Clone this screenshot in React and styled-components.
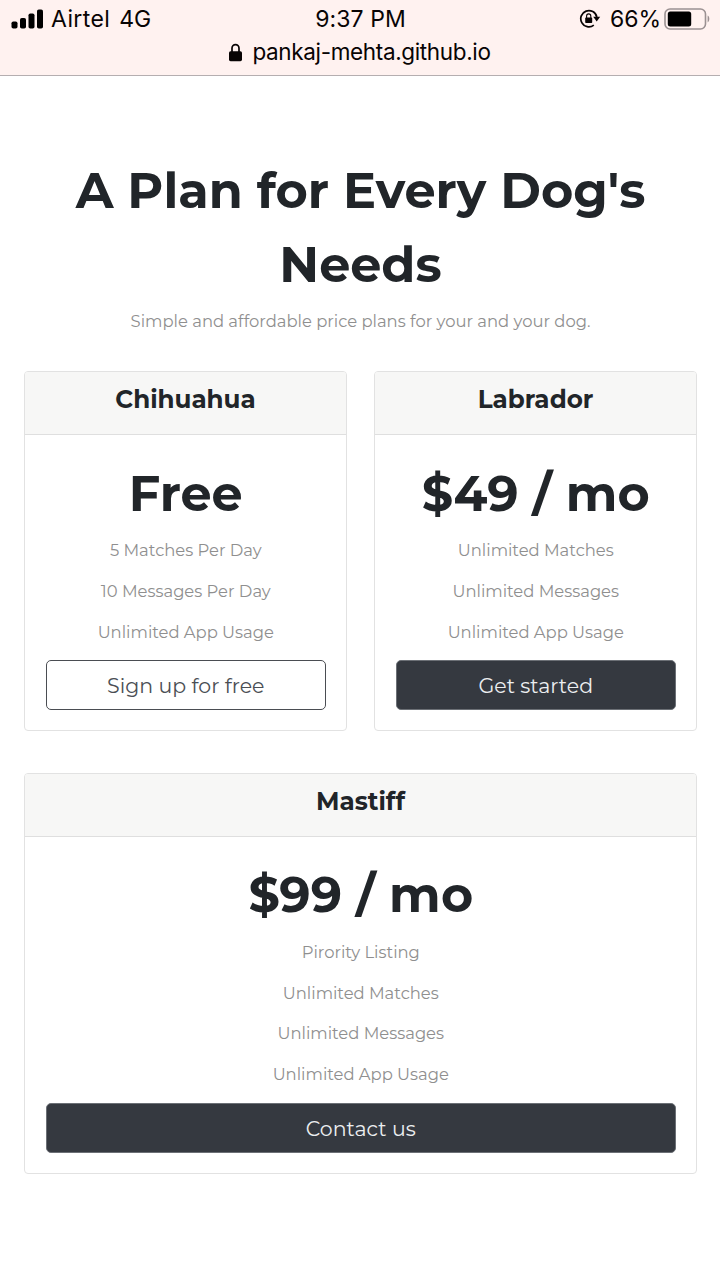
import React from "react";
import styled, { createGlobalStyle } from "styled-components";

const GlobalStyle = createGlobalStyle`
  * { box-sizing: border-box; }
  body { margin: 0; background: #fff; color: #212529; font-family: Montserrat, Inter, sans-serif; }
  h1, h2, h3, p { margin: 0; }
`;

const Page = styled.div`
  width: 720px;
  height: 1280px;
  overflow: hidden;
  background: #fff;
`;

const BrowserBar = styled.header`
  height: 76px;
  background: #fff2f0;
  border-bottom: 1px solid #b5aeb0;
  color: #080404;
  font-family: Inter, sans-serif;
`;

const StatusRow = styled.div`
  display: grid;
  grid-template-columns: 1fr auto 1fr;
  align-items: center;
  height: 38px;
  padding: 0 10px 0 11px;
  font-size: 23px;
  line-height: 38px;
  white-space: nowrap;
`;

const StatusGroup = styled.div`
  display: flex;
  align-items: center;
  gap: ${(p) => p.$gap}px;
  justify-content: ${(p) => (p.$end ? "flex-end" : "flex-start")};
`;

const StatusText = styled.span`
  letter-spacing: ${(p) => p.$tracking || 0}px;
`;

const AddressRow = styled.div`
  display: flex;
  align-items: center;
  justify-content: center;
  gap: 10px;
  height: 28px;
  font-size: 22.5px;
  line-height: 28px;
`;

const Pricing = styled.main`
  padding: 76.5px 23px 0 24px;
  text-align: center;
`;

const Title = styled.h1`
  font-size: 49.3px;
  font-weight: 700;
  line-height: 74px;
`;

const Muted = styled.p`
  color: #8f8f8f;
  font-size: 16.4px;
  font-weight: 400;
  line-height: 25.5px;
  white-space: nowrap;
`;

const Subtitle = styled(Muted)`
  margin-top: 8.5px;
`;

const Plans = styled.section`
  display: grid;
  grid-template-columns: 1fr 1fr;
  gap: 41.4px 27px;
  margin-top: 36.5px;
`;

const Card = styled.article`
  grid-column: ${(p) => (p.$wide ? "1 / -1" : "auto")};
  border: 1px solid #e2e2e2;
  border-radius: 4px;
  overflow: hidden;
`;

const CardHeader = styled.div`
  height: 63px;
  padding-top: 8px;
  background: #f7f7f6;
  border-bottom: 1px solid #dfdfdf;
`;

const PlanName = styled.h3`
  font-size: 24.6px;
  font-weight: 700;
  line-height: 38px;
`;

const CardBody = styled.div`
  display: flex;
  flex-direction: column;
  padding: 21.5px 20.5px 20px 21px;
`;

const Price = styled.h2`
  margin-bottom: 8.3px;
  font-size: 49.2px;
  font-weight: 700;
  line-height: 73.5px;
  white-space: nowrap;
`;

const Feature = styled(Muted)`
  margin-bottom: 15.2px;
`;

const PlanButton = styled.button`
  height: 50px;
  padding: 1px 0 0;
  border: 1px solid ${(p) => (p.$outline ? "#4a4d52" : "#6c7076")};
  border-radius: 5px;
  background: ${(p) => (p.$outline ? "#fff" : "#353940")};
  color: ${(p) => (p.$outline ? "#4a4e54" : "#eceef0")};
  font: 400 20.5px/47px Montserrat, Inter, sans-serif;
`;

const SignalIcon = () => (
  <svg width="33" height="20" viewBox="0 0 33 20">
    <rect x="0.5" y="12.5" width="6" height="7" rx="1.8" />
    <rect x="9" y="9" width="6" height="10.5" rx="1.8" />
    <rect x="17.5" y="4.5" width="6" height="15" rx="1.8" />
    <rect x="26" y="0.5" width="6" height="19" rx="1.8" />
  </svg>
);

const RotationLockIcon = () => (
  <svg width="22" height="20" viewBox="0 0 22 20" fill="none">
    <path d="M14.8 16.1A8.1 8.1 0 1 1 17.8 8" stroke="#080404" strokeWidth="1.7" />
    <path d="M14.2 7.8h7l-3.5 4.6z" fill="#080404" />
    <rect x="6.2" y="8.6" width="7" height="5.4" rx="0.8" fill="#080404" />
    <path d="M7.6 9V7a2.1 2.1 0 0 1 4.2 0V9" stroke="#080404" strokeWidth="1.1" />
  </svg>
);

const BatteryIcon = () => (
  <svg width="46" height="22" viewBox="0 0 46 22">
    <rect x="1" y="1" width="40.5" height="20" rx="5" fill="none" stroke="#9b9192" strokeWidth="1.6" />
    <rect x="3.8" y="3.6" width="23.4" height="14.8" rx="2.5" fill="#000" />
    <path d="M43.6 7.6c2.3 1 2.3 5.8 0 6.8z" fill="#9b9192" />
  </svg>
);

const LockIcon = () => (
  <svg width="13" height="19" viewBox="0 0 13 19">
    <path d="M3 9V5.2a3.5 3.5 0 0 1 7 0V9" fill="none" stroke="#080404" strokeWidth="1.7" />
    <rect x="0" y="8.2" width="13" height="10" rx="1.6" fill="#080404" />
  </svg>
);

const plans = [
  {
    name: "Chihuahua",
    price: "Free",
    features: ["5 Matches Per Day", "10 Messages Per Day", "Unlimited App Usage"],
    action: "Sign up for free",
    outline: true,
  },
  {
    name: "Labrador",
    price: "$49 / mo",
    features: ["Unlimited Matches", "Unlimited Messages", "Unlimited App Usage"],
    action: "Get started",
  },
  {
    name: "Mastiff",
    price: "$99 / mo",
    features: ["Pirority Listing", "Unlimited Matches", "Unlimited Messages", "Unlimited App Usage"],
    action: "Contact us",
    wide: true,
  },
];

const PlanCard = ({ plan }) => (
  <Card $wide={plan.wide}>
    <CardHeader>
      <PlanName>{plan.name}</PlanName>
    </CardHeader>
    <CardBody>
      <Price>{plan.price}</Price>
      {plan.features.map((label) => (
        <Feature key={label}>{label}</Feature>
      ))}
      <PlanButton $outline={plan.outline}>{plan.action}</PlanButton>
    </CardBody>
  </Card>
);

export default function App() {
  return (
    <>
      <GlobalStyle />
      <Page>
        <BrowserBar>
          <StatusRow>
            <StatusGroup $gap={7}>
              <SignalIcon />
              <StatusGroup $gap={9}>
                <StatusText $tracking={0.4}>Airtel</StatusText>
                <StatusText>4G</StatusText>
              </StatusGroup>
            </StatusGroup>
            <StatusText $tracking={0.1}>9:37 PM</StatusText>
            <StatusGroup $end $gap={3}>
              <StatusGroup $gap={9}>
                <RotationLockIcon />
                <StatusText>66%</StatusText>
              </StatusGroup>
              <BatteryIcon />
            </StatusGroup>
          </StatusRow>
          <AddressRow>
            <LockIcon />
            <StatusText $tracking={-0.35}>pankaj-mehta.github.io</StatusText>
          </AddressRow>
        </BrowserBar>
        <Pricing>
          <Title>A Plan for Every Dog's Needs</Title>
          <Subtitle>Simple and affordable price plans for your and your dog.</Subtitle>
          <Plans>
            {plans.map((plan) => <PlanCard key={plan.name} plan={plan} />)}
          </Plans>
        </Pricing>
      </Page>
    </>
  );
}
